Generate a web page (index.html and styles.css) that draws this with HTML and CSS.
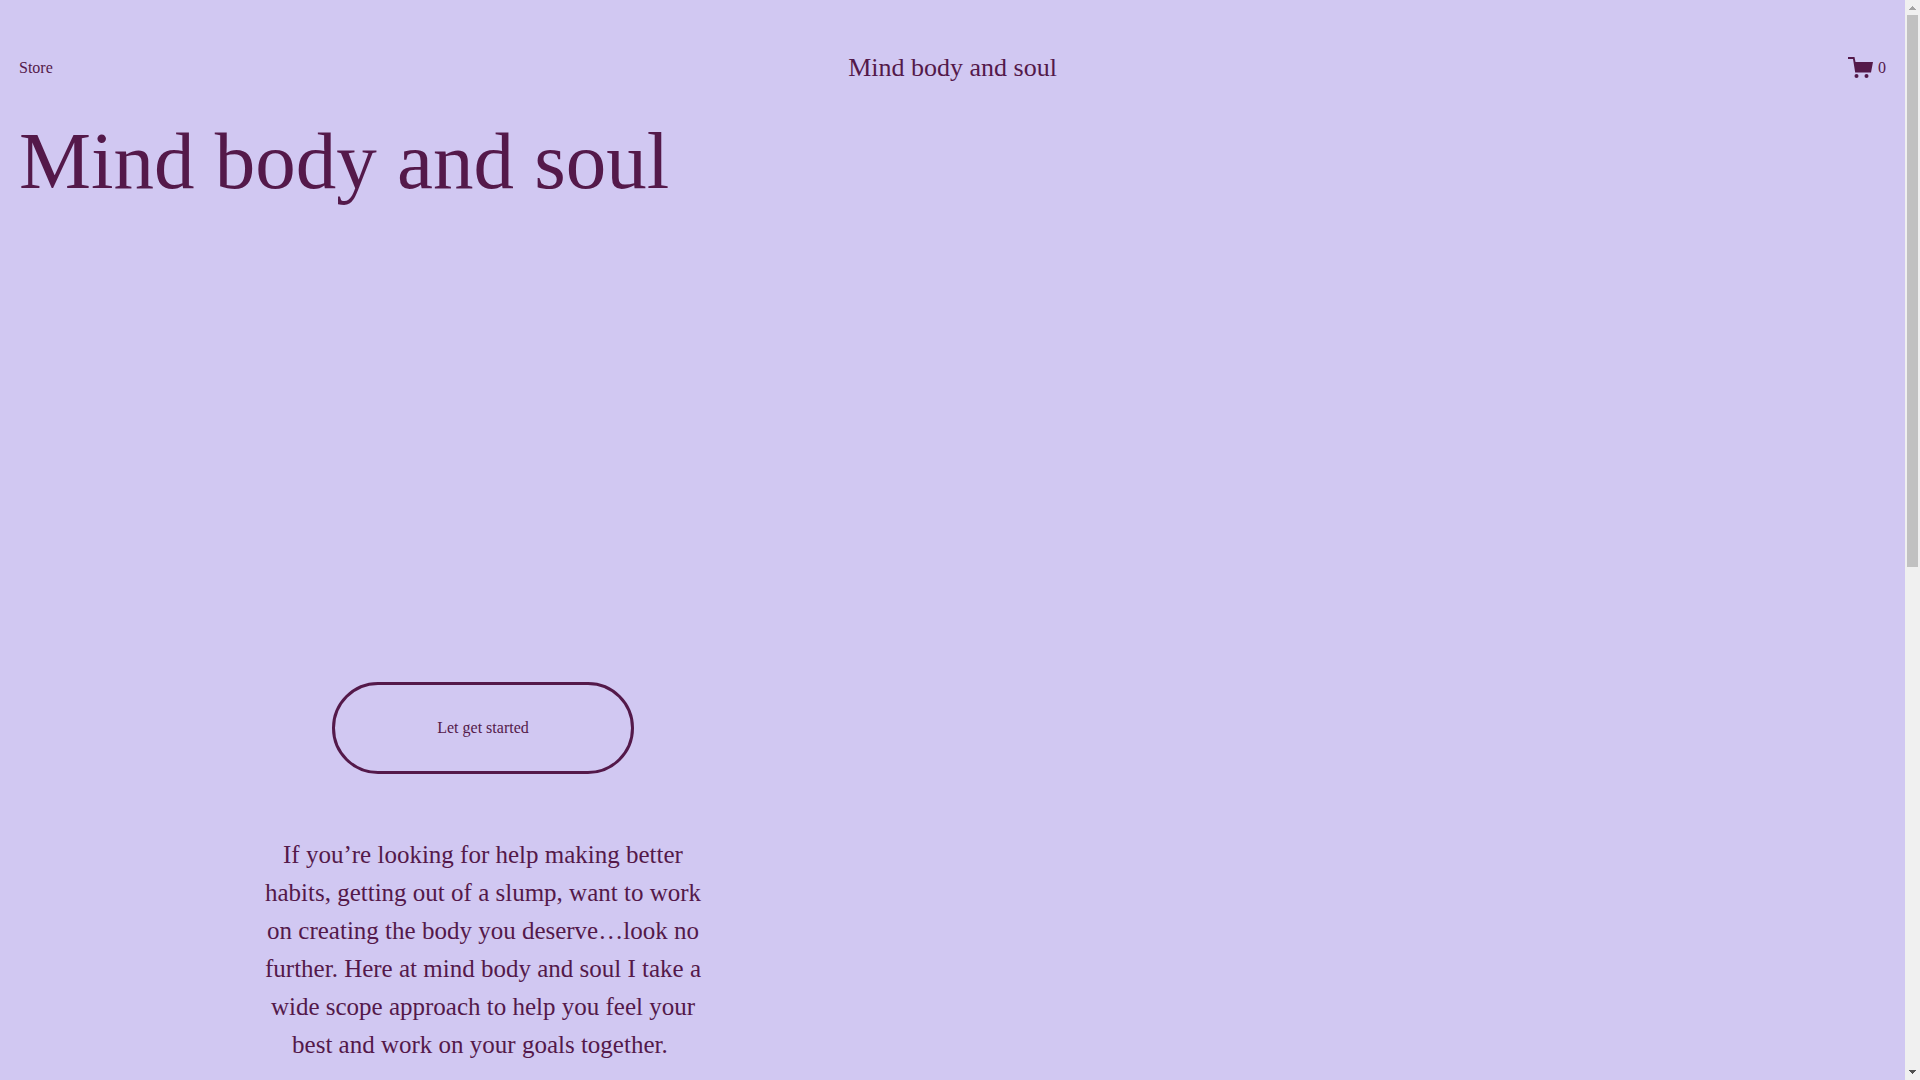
FILE: index.html
```html
<!DOCTYPE html>
<html lang="en">
<head>
<meta charset="utf-8">
<meta name="viewport" content="width=device-width, initial-scale=1">
<title>Mind body and soul</title>
<link rel="stylesheet" href="styles.css">
</head>
<body>
<div class="site">
  <header class="header">
    <nav><a class="nav-link" href="#store">Store</a></nav>
    <a class="site-title" href="#home">Mind body and soul</a>
    <a class="cart" href="#cart" aria-label="Cart, 0 items">
      <svg class="cart-icon" viewBox="0 0 25 21" aria-hidden="true">
        <path d="M0 0H6.500L7.500 5H25L23 15.500H7.200L5 2H0Z"/>
        <circle cx="8.500" cy="19" r="2"/>
        <circle cx="18.500" cy="19" r="2"/>
      </svg>
      <span>0</span>
    </a>
  </header>
  <main class="hero">
    <h1 class="hero-title">Mind body and soul</h1>
    <button class="hero-button" type="button">Let get started</button>
    <p class="hero-text">If you’re looking for help making better habits, getting out of a slump, want to work on creating the body you deserve…look no further. Here at mind body and soul I take a wide scope approach to help you feel your best and work on your goals together.&nbsp;</p>
  </main>
</div>
<div class="scrollbar" aria-hidden="true">
  <svg class="arrow arrow-up" viewBox="0 0 7 4"><path d="M3 0H4V1H5V2H6V3H7V4H0V3H1V2H2V1H3Z"/></svg>
  <div class="track"><div class="thumb"></div></div>
  <svg class="arrow arrow-down" viewBox="0 0 7 4"><path d="M0 0H7V1H6V2H5V3H4V4H3V3H2V2H1V1H0Z"/></svg>
</div>
</body>
</html>
```
FILE: styles.css
```css
* { box-sizing: border-box; }

body {
  margin: 0;
  min-height: 100vh;
  display: grid;
  grid-template-columns: 1fr 15px;
  background: #d1c8f2;
  color: #54194a;
  font-family: "Liberation Serif", "Times New Roman", serif;
  font-size: 16px;
  line-height: 24px;
}

a {
  color: inherit;
  text-decoration: none;
}

.header {
  display: grid;
  grid-template-columns: 1fr auto 1fr;
  align-items: center;
  min-height: 111px;
  padding: 40px 19px 16px;
}

.site-title {
  font-size: 26px;
  line-height: 32px;
}

.cart {
  display: flex;
  align-items: center;
  justify-self: end;
  gap: 5px;
}

.cart-icon {
  width: 25px;
  height: 21px;
  fill: currentColor;
}

.hero {
  display: grid;
  grid-template-columns: repeat(24, 1fr);
  column-gap: 11px;
  padding: 0 19px;
}

.hero-title {
  grid-column: 1 / -1;
  margin: 0;
  font-size: 81px;
  font-weight: 400;
  line-height: 100px;
}

.hero-button {
  grid-column: 5 / 9;
  margin-top: 471px;
  padding: 31px 24px;
  border: 3px solid currentColor;
  border-radius: 46px;
  background: transparent;
  color: inherit;
  font: inherit;
  cursor: pointer;
}

.hero-text {
  grid-column: 4 / 10;
  margin: 62px 0 0;
  font-size: 25px;
  line-height: 38px;
  text-align: center;
}

.scrollbar {
  display: flex;
  flex-direction: column;
  align-items: center;
  background: #f0f0f0;
}

.arrow {
  width: 7px;
  height: 4px;
}

.arrow-up {
  margin: 6px 0 5px;
  fill: #a3a3a3;
}

.arrow-down {
  margin: 5px 0 6px;
  fill: #505050;
}

.track {
  flex: 1;
  width: 11px;
}

.thumb {
  height: 52.6%;
  background: #c1c1c1;
}
```
